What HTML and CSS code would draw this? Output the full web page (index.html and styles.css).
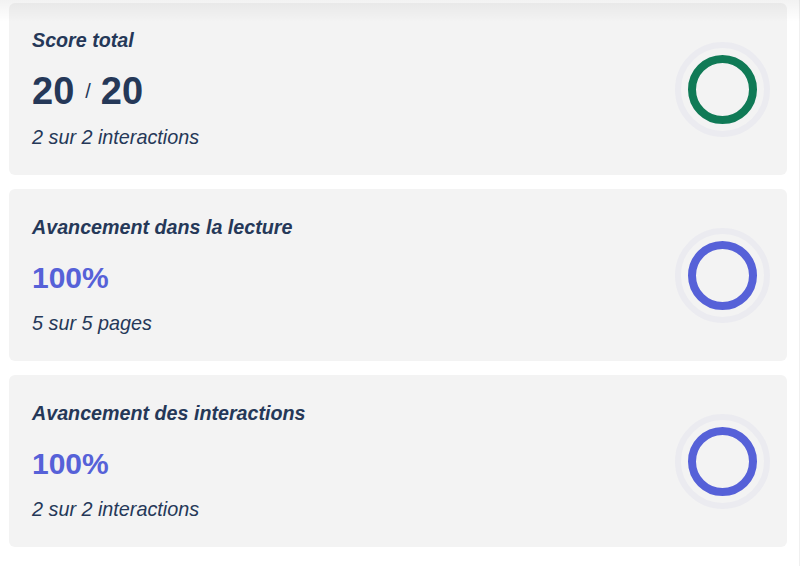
FILE: index.html
```html
<!DOCTYPE html>
<html lang="fr">
<head>
<meta charset="utf-8">
<title>Progression</title>
<link rel="stylesheet" href="styles.css">
</head>
<body>
<div class="top-shadow"></div>
<main class="list">
  <section class="card">
    <div class="info">
      <h2 class="title">Score total</h2>
      <div class="score"><span class="num">20</span><span class="slash">/</span><span class="num">20</span></div>
      <p class="sub sub-score">2 sur 2 interactions</p>
    </div>
    <div class="ring">
      <div class="ring-inner green"></div>
    </div>
  </section>
  <section class="card">
    <div class="info">
      <h2 class="title">Avancement dans la lecture</h2>
      <div class="percent">100%</div>
      <p class="sub">5 sur 5 pages</p>
    </div>
    <div class="ring">
      <div class="ring-inner indigo"></div>
    </div>
  </section>
  <section class="card">
    <div class="info">
      <h2 class="title">Avancement des interactions</h2>
      <div class="percent">100%</div>
      <p class="sub">2 sur 2 interactions</p>
    </div>
    <div class="ring">
      <div class="ring-inner indigo"></div>
    </div>
  </section>
</main>
</body>
</html>
```
FILE: styles.css
```css
html, body {
  margin: 0;
  padding: 0;
  background: #ffffff;
}
body {
  font-family: "Liberation Sans", Arial, sans-serif;
  color: #253858;
  height: 566px;
  overflow: hidden;
  border-right: 1px solid #f0f0f0;
  box-sizing: border-box;
}
.top-shadow {
  position: absolute;
  left: 0;
  top: 0;
  width: 100%;
  height: 22px;
  background: linear-gradient(to bottom, rgba(0,0,0,0.05), rgba(0,0,0,0));
  pointer-events: none;
  z-index: 2;
}
.list {
  display: flex;
  flex-direction: column;
  gap: 14px;
  padding: 3px 12px 0 9px;
}
.card {
  background: #f3f3f3;
  border-radius: 6px;
  height: 172px;
  box-sizing: border-box;
  padding: 0 17px 0 23px;
  display: flex;
  align-items: center;
  justify-content: space-between;
}
.info {
  display: flex;
  flex-direction: column;
}
.title {
  margin: 0;
  font-size: 19.7px;
  font-weight: bold;
  font-style: italic;
  line-height: 22px;
}
.score {
  margin-top: 20px;
  display: flex;
  align-items: baseline;
  line-height: 40px;
}
.num {
  font-size: 38px;
  font-weight: bold;
}
.slash {
  font-size: 20px;
  margin: 0 10px 0 11px;
  transform: translateY(-6px);
}
.percent {
  margin-top: 23px;
  font-size: 30px;
  font-weight: bold;
  color: #5661d8;
  line-height: 34px;
}
.sub {
  margin: 16px 0 0;
  font-size: 19.8px;
  font-style: italic;
  line-height: 24px;
}
.sub-score {
  margin-top: 8px;
}
.ring {
  width: 95px;
  height: 95px;
  border-radius: 50%;
  border: 6px solid #ebebf0;
  box-sizing: border-box;
  display: flex;
  align-items: center;
  justify-content: center;
}
.ring-inner {
  width: 69px;
  height: 69px;
  border-radius: 50%;
  box-sizing: border-box;
  border: 8px solid #107a56;
}
.ring-inner.green {
  border-color: #107a56;
}
.ring-inner.indigo {
  border-color: #5661d8;
}
```
